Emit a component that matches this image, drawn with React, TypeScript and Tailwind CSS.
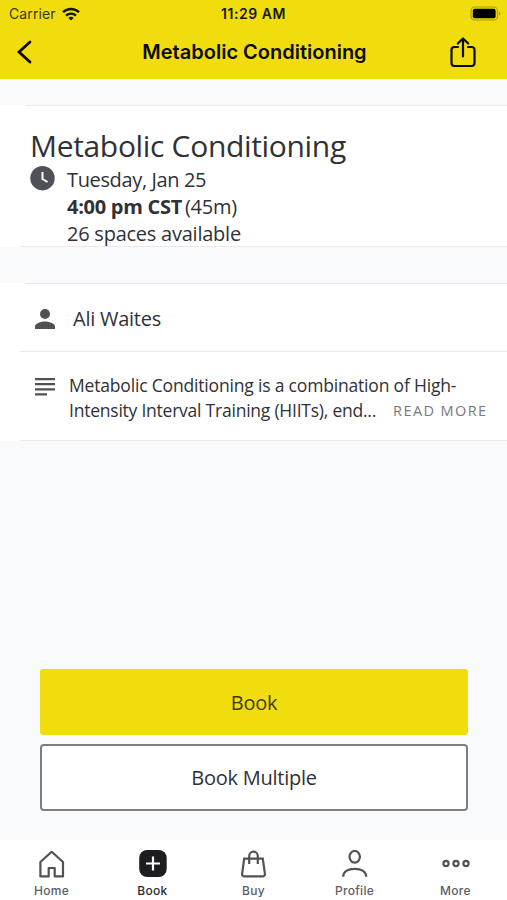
import type { ReactNode } from 'react';
import { clsx } from 'clsx';

interface Tab {
  label: string;
  icon: ReactNode;
  active?: boolean;
}

const tabs: Tab[] = [
  {
    label: 'Home',
    icon: (
      <path d="M14.7 1.8 3.4 12v14.4h8.300V18h6v8.400h8.300V12z" strokeLinejoin="round" />
    ),
  },
  {
    label: 'Book',
    active: true,
    icon: (
      <>
        <rect x="1.200" y="0" width="27.500" height="27" rx="8" fill="#1d1d20" stroke="none" />
        <path d="M15 6.500v14M8 13.500h14" stroke="#fff" strokeWidth="2.200" />
      </>
    ),
  },
  {
    label: 'Buy',
    icon: (
      <>
        <path d="M5.200 8.700h18.600l2.100 15a2.300 2.300 0 0 1-2.300 2.700H5.400a2.300 2.300 0 0 1-2.300-2.700z" />
        <path d="M10.200 14V6a4.300 4.300 0 0 1 8.600 0V14" />
      </>
    ),
  },
  {
    label: 'Profile',
    icon: (
      <>
        <ellipse cx="14.700" cy="6.800" rx="5.200" ry="5.800" />
        <path d="M3.200 26.800c0-5 4.500-8 11.500-8s11.500 3 11.500 8" />
      </>
    ),
  },
  {
    label: 'More',
    icon: (
      <>
        <circle cx="5" cy="13.500" r="2.600" />
        <circle cx="15" cy="13.500" r="2.600" />
        <circle cx="25" cy="13.500" r="2.600" />
      </>
    ),
  },
];

function StatusBar() {
  return (
    <div className="grid grid-cols-3 items-center h-[27px] pl-[9px] pr-[6px] text-[#171703]">
      <div className="flex items-center gap-[6px]">
        <span className="text-[14px] tracking-[0.1px] text-[#3a3708]">Carrier</span>
        <svg className="w-[18px] h-[14px]" viewBox="0 0 18 14" fill="none" stroke="currentColor" strokeWidth="2.4">
          <path d="M1 5.2a11.5 11.5 0 0 1 16 0" />
          <path d="M4 8.6a7.2 7.2 0 0 1 10 0" />
          <path d="M9 13.6 6.3 10.9a4 4 0 0 1 5.4 0z" fill="currentColor" stroke="none" />
        </svg>
      </div>
      <div className="pr-[3px] text-center text-[14px] tracking-[0.55px] font-semibold whitespace-nowrap">
        11:29 AM
      </div>
      <svg className="w-[31px] h-[15px] justify-self-end" viewBox="0 0 31 15">
        <rect x="1" y="1" width="26.5" height="13" rx="3.8" fill="none" stroke="#aa9d12" strokeWidth="1.2" />
        <rect x="2.8" y="2.8" width="22.8" height="9.4" rx="2" fill="#000" />
        <path d="M29 5.4c1.9.8 1.9 3.4 0 4.2z" fill="#aa9d12" />
      </svg>
    </div>
  );
}

function Header() {
  return (
    <header className="h-[79px] bg-[#f1dd0e] text-[#0c0c02] font-['Inter',sans-serif]">
      <StatusBar />
      <div className="flex items-center justify-between h-[50px] pl-[16px] pr-[30px]">
        <svg className="w-[17px] h-[24px]" viewBox="0 0 17 24" fill="none" stroke="currentColor" strokeWidth="2.8" strokeLinecap="round">
          <path d="M14 2 3 12l11 10" />
        </svg>
        <h1 className="pl-[27px] text-[20px] font-semibold whitespace-nowrap">Metabolic Conditioning</h1>
        <svg className="w-[28px] h-[32px]" viewBox="0 0 28 32" fill="none" stroke="currentColor" strokeWidth="2.2" strokeLinecap="round" strokeLinejoin="round">
          <path d="M9 11H5.500a3 3 0 0 0-3 3v13a3 3 0 0 0 3 3h17a3 3 0 0 0 3-3v-13a3 3 0 0 0-3-3H19" />
          <path d="M14 20.500V3M8.800 7.500 14 2.500l5.200 5" />
        </svg>
      </div>
    </header>
  );
}

function Divider({ wide }: { wide?: boolean }) {
  return <div className={clsx('h-px shrink-0 bg-[#e7e9ec]', wide ? 'ml-[20px]' : 'ml-[25px]')} />;
}

function ClassSummary() {
  return (
    <section className="h-[142px] bg-white">
      <Divider />
      <div className="h-[140px] pl-[30px] pt-[20px]">
        <h2 className="text-[30px] leading-[40px] tracking-[-0.33px] whitespace-nowrap">
          Metabolic Conditioning
        </h2>
        <div className="flex items-start gap-[12px]">
          <svg className="w-[25px] h-[25px]" viewBox="0 0 25 25">
            <circle cx="12.5" cy="12.2" r="12.2" fill="#505158" />
            <path d="M12.500 6v7l5 3" fill="none" stroke="#fff" strokeWidth="2" />
          </svg>
          <div className="text-[20px] leading-[27px] tracking-[-0.28px] whitespace-nowrap">
            <p className="tracking-[-0.36px]">Tuesday, Jan 25</p>
            <p className="flex gap-[3px]">
              <strong className="font-bold">4:00 pm CST</strong>
              <span>(45m)</span>
            </p>
            <p className="tracking-[-0.24px]">26 spaces available</p>
          </div>
        </div>
      </div>
      <Divider wide />
    </section>
  );
}

function ClassDetails() {
  return (
    <section className="mt-[36px] bg-white">
      <Divider />
      <div className="flex items-center h-[67px] pt-[3px] pl-[35px] gap-[18px]">
        <svg className="w-[20px] h-[20px]" viewBox="0 0 20 20" fill="#505156">
          <circle cx="10" cy="5" r="5" />
          <path d="M0 20v-2.500c0-3.300 6.700-5 10-5s10 1.700 10 5V20z" />
        </svg>
        <span className="text-[20px] tracking-[-0.25px]">Ali Waites</span>
      </div>
      <Divider wide />
      <div className="flex items-start h-[88px] pt-[21px] pl-[35px] gap-[14px]">
        <svg className="w-[20px] h-[18px] mt-[5px]" viewBox="0 0 20 18" fill="#505156">
          <path d="M0 0h20v2.200H0zM0 5.100h20v2.200H0zM0 10.200h20v2.200H0zM0 15.300h12v2.200H0z" />
        </svg>
        <div className="text-[17.5px] leading-[25px] tracking-[-0.18px] whitespace-nowrap">
          <p>Metabolic Conditioning is a combination of High-</p>
          <p className="flex items-start gap-[17px]">
            <span className="tracking-[-0.23px]">Intensity Interval Training (HIITs), end...</span>
            <button className="text-[14.5px] leading-[25px] tracking-[1.4px] text-[#77797d]">READ MORE</button>
          </p>
        </div>
      </div>
      <Divider wide />
    </section>
  );
}

function TabBar() {
  return (
    <nav className="grid grid-cols-5 h-[60px] pt-[10px] px-px bg-white font-['Inter',sans-serif]">
      {tabs.map(tab => (
        <button
          key={tab.label}
          className={clsx(
            'flex flex-col items-center text-[12px] leading-[15px] tracking-[0.3px] font-medium',
            tab.active ? 'text-[#2a2b2e]' : 'text-[#5c5e62]'
          )}
        >
          <svg className="w-[30px] h-[28px] mb-[5px]" viewBox="0 0 30 28" fill="none" stroke="#505258" strokeWidth="2.2">
            {tab.icon}
          </svg>
          {tab.label}
        </button>
      ))}
    </nav>
  );
}

export default function App() {
  return (
    <div className="flex flex-col w-full h-screen overflow-hidden bg-[#f8fafc] text-[#303136] font-['Open_Sans',sans-serif]">
      <Header />
      <main className="flex flex-col flex-1 pt-[26px]">
        <ClassSummary />
        <ClassDetails />
        <div className="flex flex-col gap-[9px] mt-auto mb-[29px] pl-[40px] pr-[39px] text-[20px] tracking-[-0.25px]">
          <button className="h-[66px] pt-px rounded-[3px] bg-[#f1dd0e] text-[#3c3a14]">Book</button>
          <button className="h-[67px] pt-px rounded-[4px] border-2 border-[#7c7e81] bg-white">
            Book Multiple
          </button>
        </div>
      </main>
      <TabBar />
    </div>
  );
}
